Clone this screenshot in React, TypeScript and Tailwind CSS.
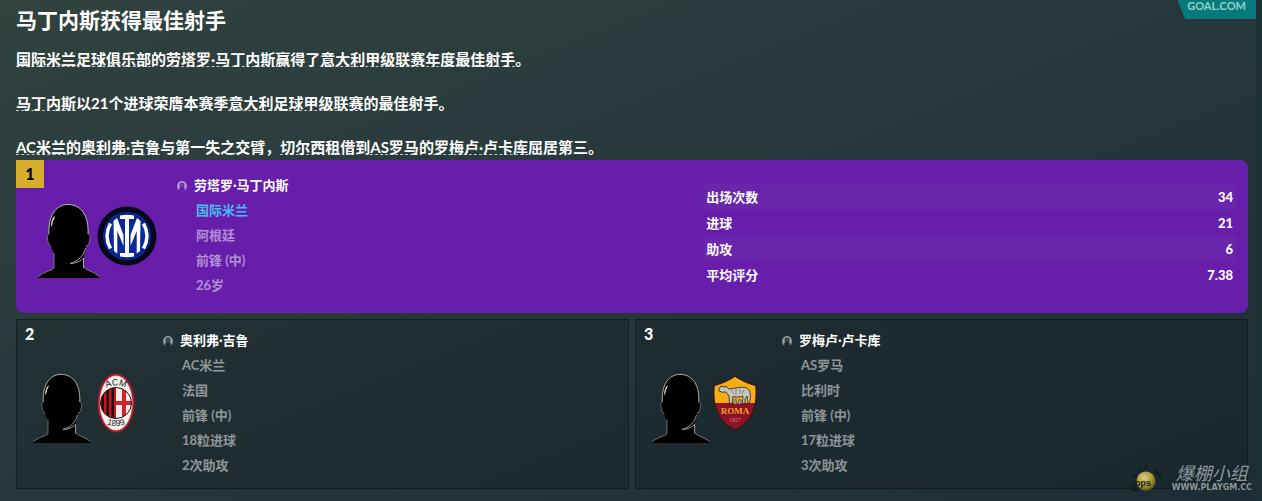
import React from "react";

type Player = {
  rank: number;
  name: string;
  club: string;
  country: string;
  position: string;
  extra: string[];
};

const winner: Player = {
  rank: 1,
  name: "劳塔罗·马丁内斯",
  club: "国际米兰",
  country: "阿根廷",
  position: "前锋 (中)",
  extra: ["26岁"],
};

const runnersUp: Player[] = [
  {
    rank: 2,
    name: "奥利弗·吉鲁",
    club: "AC米兰",
    country: "法国",
    position: "前锋 (中)",
    extra: ["18粒进球", "2次助攻"],
  },
  {
    rank: 3,
    name: "罗梅卢·卢卡库",
    club: "AS罗马",
    country: "比利时",
    position: "前锋 (中)",
    extra: ["17粒进球", "3次助攻"],
  },
];

const stats = [
  { label: "出场次数", value: "34" },
  { label: "进球", value: "21" },
  { label: "助攻", value: "6" },
  { label: "平均评分", value: "7.38" },
];

const TextLink = ({ children }: { children: React.ReactNode }) => (
  <a
    href="#"
    className="underline decoration-white/70 decoration-dashed decoration-1 underline-offset-1 [text-decoration-skip-ink:none]"
  >
    {children}
  </a>
);

const Silhouette = ({ className }: { className: string }) => (
  <svg viewBox="0 0 64 75" className={className} aria-hidden="true">
    <path
      d="M0 75C5 69 14 68 17 65L17 51C15 47 14 45 14 43C11 42 10 36 10 33C10 31 11 31 12 31C11 14 18 1.500 31 1.500C45 1.500 52 14 51 31C53 31 53.500 32 53 35C52.500 39 52 42 49 43C49 47 48 50 47 52L47 65C50 68 59 69 64 75Z"
      fill="#000"
    />
    <path
      d="M12 31C11 14 18 1.500 31 1.500C45 1.500 52 14 51 31"
      fill="none"
      stroke="#b9b9b0"
      strokeWidth="1"
    />
    <path
      d="M12 31C10 31 10 33 10.500 36C11 40 12 43 14 43M51 31C53.500 31 53 35 52.500 38C52 41 51 43 49 43M17 50V65C14 68 6 69 1 74M47 64C50 68 58 69 63 74"
      fill="none"
      stroke="#8b8b86"
      strokeWidth="0.8"
    />
    <path
      d="M48.500 45C47 52 42 58 33 60.500C39 60.500 44 58 46.500 55V65"
      fill="none"
      stroke="#a5a59f"
      strokeWidth="1"
    />
    <path d="M14 24C14 18 15.500 14 18 13L17 17L16 17.500C16 20 15.500 22 14 24Z" fill="#d8d4ae" />
  </svg>
);

const InterLogo = () => (
  <svg viewBox="0 0 60 60" className="size-[60px]" aria-label="国际米兰">
    <circle cx="30" cy="30" r="29.500" fill="#04071a" />
    <circle cx="30" cy="30" r="24" fill="#0a2a9c" />
    <circle cx="30" cy="30" r="22" fill="none" stroke="#031a5e" strokeWidth="0.8" />
    <g fill="#fff">
      <path d="M23 9.500Q30 8 37 9.500V13H32V47H37V50.500Q30 52 23 50.500V47H28V13H23Z" />
      <path d="M16.500 15L20 12L26.500 29V40L20.300 25V47.500L17 45Z" />
      <path d="M43.500 15L40 12L33.500 29V40L39.700 25V47.500L43 45Z" />
    </g>
    <path
      d="M13.500 17.500Q6.500 30 13.500 42.500M46.500 17.500Q53.500 30 46.500 42.500"
      fill="none"
      stroke="#fff"
      strokeWidth="3.500"
    />
  </svg>
);

const MilanLogo = () => (
  <svg viewBox="0 0 60 60" className="size-[60px]" aria-label="AC米兰">
    <defs>
      <clipPath id="milan-disc">
        <ellipse cx="30" cy="30" rx="15.500" ry="15.500" />
      </clipPath>
    </defs>
    <ellipse cx="30" cy="30" rx="18.500" ry="29.500" fill="#b5182a" />
    <ellipse cx="30" cy="30" rx="16.500" ry="27.500" fill="#e9c9c4" />
    <ellipse cx="30" cy="30" rx="15.800" ry="26.800" fill="#f4f2ec" />
    <g clipPath="url(#milan-disc)">
      <rect x="14" y="14" width="16" height="32" fill="#c4161f" />
      <path d="M15.500 14h2.500v32h-2.500zM20.500 14h2.500v32h-2.500zM25.500 14h2.500v32h-2.500z" fill="#1b1113" />
      <rect x="30" y="14" width="16" height="32" fill="#f6efec" />
      <path d="M36 14h4v14h6v4h-6v14h-4V32h-6v-4h6z" fill="#d6202c" />
    </g>
    <circle cx="30" cy="30" r="15.500" fill="none" stroke="#241416" strokeWidth="1" />
    <path id="milan-top" d="M18 16Q30 9 42 16" fill="none" />
    <path id="milan-bottom" d="M18 50Q30 56 42 50" fill="none" />
    <g fontFamily="Liberation Sans" fontSize="9" fill="#222" textAnchor="middle">
      <text>
        <textPath href="#milan-top" startOffset="50%">ACM</textPath>
      </text>
      <text fontSize="8.500">
        <textPath href="#milan-bottom" startOffset="50%">1899</textPath>
      </text>
    </g>
  </svg>
);

const RomaLogo = () => (
  <svg viewBox="0 0 60 60" className="size-[60px]" aria-label="AS罗马">
    <defs>
      <clipPath id="roma-shield">
        <path d="M30 3Q38 9 51 12.500C53 33 47 50 30 57C13 50 7 33 9 12.500Q22 9 30 3Z" />
      </clipPath>
    </defs>
    <g clipPath="url(#roma-shield)">
      <rect width="60" height="31" fill="#f7ae16" />
      <rect y="30" width="60" height="30" fill="#8d1226" />
    </g>
    <path
      d="M30 3Q38 9 51 12.500C53 33 47 50 30 57C13 50 7 33 9 12.500Q22 9 30 3Z"
      fill="none"
      stroke="#2d1b13"
      strokeWidth="1.500"
    />
    <path
      d="M14 16L16 13L19 14L21 13.500L24 16L34 14.500Q42 13.500 44 17Q46 20 45 29L43 30L42 23L40 26V30.500H37.500L38 23Q33 25 28 23.500L27 30.500H24.500L24 23L21 19Q17 20 14 18Z"
      fill="#c4c4c0"
      stroke="#35322f"
      strokeWidth="0.9"
    />
    <path d="M26 17L29 21M31 16V22M35 16.500V21M39 17L37 21" stroke="#77756f" strokeWidth="0.8" />
    <path d="M29 31V27L31 25.500L32 31M33 31L34 26L36 27V31" fill="#a19a8c" stroke="#4a443d" strokeWidth="0.6" />
    <text x="30" y="41" fontFamily="Liberation Serif" fontSize="9" fontWeight="bold" fill="#f2a52a" textAnchor="middle">
      ROMA
    </text>
    <text x="30" y="49" fontFamily="Liberation Serif" fontSize="6" fill="#cf8d72" textAnchor="middle">
      1927
    </text>
  </svg>
);

const PersonIcon = () => (
  <svg viewBox="0 0 12 12" className="size-3 shrink-0 fill-white/50" aria-hidden="true">
    <path
      fillRule="evenodd"
      d="M6 1A5 5 0 0 0 1 6C1 8 1.800 9.500 3.200 10.500V8.500Q3.200 7.500 4.600 7.200Q3.700 6.300 3.700 5A2.300 2.300 0 0 1 8.300 5Q8.300 6.300 7.400 7.200Q8.800 7.500 8.800 8.500V10.500C10.200 9.500 11 8 11 6A5 5 0 0 0 6 1Z"
    />
    <circle cx="6" cy="5" r="1.300" className="fill-white/20" />
  </svg>
);

const PlayerInfo = ({ player, highlight = false }: { player: Player; highlight?: boolean }) => (
  <ul className="text-[13px] leading-[25px] font-bold text-white/50">
    <li className="flex items-center gap-1.5">
      <PersonIcon />
      <a href="#" className="text-white">
        {player.name}
      </a>
    </li>
    <li className="pl-5">
      <a href="#" className={highlight ? "text-[#45bdee]" : ""}>
        {player.club}
      </a>
    </li>
    <li className="pl-5">{player.country}</li>
    <li className="pl-5">{player.position}</li>
    {player.extra.map((line) => (
      <li key={line} className="pl-5">
        {line}
      </li>
    ))}
  </ul>
);

const RunnerUpCard = ({ player }: { player: Player }) => (
  <section className="relative flex items-center border border-black/30 bg-black/15 pt-2 pb-2.5 pl-[15px]">
    <span className="absolute top-1 left-2 text-base leading-5 font-black text-white">
      {player.rank}
    </span>
    <Silhouette className="mt-2.5 h-[70px] w-[60px]" />
    <div className="-ml-1.5">{player.rank === 2 ? <MilanLogo /> : <RomaLogo />}</div>
    <div className="ml-4">
      <PlayerInfo player={player} />
    </div>
  </section>
);

const Watermark = () => (
  <div className="absolute right-1 bottom-1.5 flex items-center gap-1.5">
    <svg viewBox="0 0 38 32" className="h-8 w-[38px]" aria-hidden="true">
      <defs>
        <radialGradient id="bomb" cx="0.4" cy="0.35" r="0.7">
          <stop offset="0" stopColor="#d9cf83" />
          <stop offset="0.6" stopColor="#a8942f" />
          <stop offset="1" stopColor="#55501f" />
        </radialGradient>
      </defs>
      <path
        d="M10 6L12 9M19 2L18 6M4 11L9 14M26 12L29 9L31 12L34 10M29 9L28 6M31 12L33 14M9 22Q2 23 5 27L10 28"
        fill="none"
        stroke="#101b20"
        strokeWidth="1.800"
      />
      <circle cx="18" cy="18" r="9.500" fill="url(#bomb)" />
      <text x="15" y="23" fontFamily="Liberation Sans" fontSize="9" fontWeight="bold" fill="#151d1c" textAnchor="middle">
        ops
      </text>
    </svg>
    <div className="text-center text-[#8d979b]">
      <p className="text-lg leading-[18px] italic">爆棚小组</p>
      <p className="font-['DejaVu_Sans'] text-[8px] leading-3 font-bold">WWW.PLAYGM.CC</p>
    </div>
  </div>
);

const App = () => {
  return (
    <main className="relative min-h-screen border-r-[6px] border-[#1d3035] bg-linear-to-br from-[#30433f] via-[#26373b] to-[#1e2d35] pr-2 pb-3 pl-4 font-[Lato,'Noto_Sans_CJK_SC',sans-serif] text-white">
      <header className="flex items-start justify-between">
        <h1 className="pt-1.5 text-[21px] leading-7 font-bold">马丁内斯获得最佳射手</h1>
        <span className="-mr-2 h-[19px] bg-[#077b7c] px-2.5 text-[11px] leading-3 font-bold text-[#94cfcc] [clip-path:polygon(0_0,100%_0,100%_100%,8px_100%)]">
          GOAL.COM
        </span>
      </header>

      <div className="mt-3.5 space-y-[22px] text-[15px] leading-[22px] font-bold">
        <p>
          <TextLink>国际米兰足球俱乐部</TextLink>的<TextLink>劳塔罗·马丁内斯</TextLink>赢得了
          <TextLink>意大利甲级联赛年度最佳射手</TextLink>。
        </p>
        <p>
          <TextLink>马丁内斯</TextLink>以21个进球荣膺本赛季
          <TextLink>意大利足球甲级联赛</TextLink>的最佳射手。
        </p>
        <p>
          <TextLink>AC米兰</TextLink>的<TextLink>奥利弗·吉鲁</TextLink>与第一失之交臂，
          <TextLink>切尔西</TextLink>租借到<TextLink>AS罗马</TextLink>的
          <TextLink>罗梅卢·卢卡库</TextLink>屈居第三。
        </p>
      </div>

      <div className="mt-0.5 space-y-1.5">
        <section className="relative flex items-center overflow-hidden rounded-lg rounded-tl-none bg-[#661eab] pt-[13px] pb-[15px] pl-[21px]">
          <span className="absolute top-0 left-0 size-7 bg-[#d7ad2c] text-center text-base leading-7 font-black text-black">
            1
          </span>
          <Silhouette className="mt-2.5 h-[75px] w-16" />
          <div className="-ml-1">
            <InterLogo />
          </div>
          <div className="ml-[19px] flex-1">
            <PlayerInfo player={winner} highlight />
          </div>
          {/* season totals */}
          <table className="mr-3 w-[44%] text-[13px] leading-[26px] font-bold">
            <tbody>
              {stats.map((row) => (
                <tr key={row.label} className="odd:bg-white/[0.03]">
                  <th scope="row" className="p-0 pl-[3px] text-left">
                    {row.label}
                  </th>
                  <td className="p-0 pr-[3px] text-right font-black">{row.value}</td>
                </tr>
              ))}
            </tbody>
          </table>
        </section>

        <div className="grid grid-cols-2 gap-1.5">
          {runnersUp.map((player) => (
            <RunnerUpCard key={player.rank} player={player} />
          ))}
        </div>
      </div>

      <Watermark />
    </main>
  );
};

export default App;
